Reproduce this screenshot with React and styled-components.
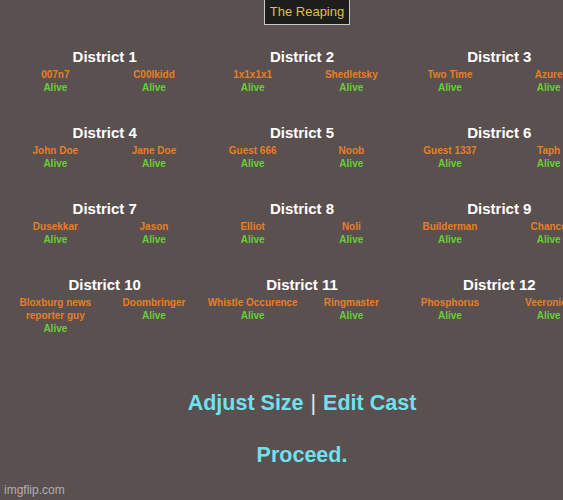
import React from "react";
import styled, { createGlobalStyle } from "styled-components";

const GlobalStyle = createGlobalStyle`
  html, body {
    margin: 0;
    padding: 0;
    background: #5a5050;
    overflow: hidden;
  }
  body {
    font-family: "Liberation Sans", Arial, sans-serif;
    height: 500px;
  }
`;

const Page = styled.div`
  position: relative;
  width: 604px;
  height: 500px;
  padding: 0 6px;
  box-sizing: border-box;
  display: flex;
  flex-direction: column;
  align-items: stretch;
`;

const TitleRow = styled.div`
  display: flex;
  justify-content: center;
  padding-left: 10px;
`;

const TitleBox = styled.div`
  background: #1d1d1b;
  border: 1px solid #c9c9c9;
  border-top: none;
  color: #e0bf48;
  font-size: 13px;
  line-height: 24px;
  padding: 0 5px;
`;

const Board = styled.div`
  margin-top: 23px;
  display: grid;
  grid-template-columns: repeat(3, 1fr);
  row-gap: 30px;
`;

const District = styled.section`
  display: flex;
  flex-direction: column;
  align-items: stretch;
`;

const Heading = styled.h2`
  margin: 0;
  text-align: center;
  color: #ffffff;
  font-size: 15px;
  font-weight: bold;
  line-height: 17px;
`;

const Tributes = styled.div`
  margin-top: 3px;
  display: grid;
  grid-template-columns: 1fr 1fr;
`;

const Tribute = styled.div`
  display: flex;
  flex-direction: column;
  align-items: center;
  text-align: center;
  font-size: 10px;
  font-weight: bold;
  line-height: 13px;
`;

const Name = styled.span`
  color: #e57f26;
`;

const Status = styled.span`
  color: #68cd37;
`;

const Links = styled.div`
  margin-top: 56px;
  text-align: center;
  font-size: 21.5px;
  font-weight: bold;
  line-height: 24px;
  color: #6fe1ef;
`;

const Divider = styled.span`
  color: #e6e6e6;
  font-weight: normal;
  padding: 0 1px;
`;

const Proceed = styled.div`
  margin-top: 28px;
  text-align: center;
  font-size: 21.5px;
  font-weight: bold;
  line-height: 24px;
  color: #6fe1ef;
`;

const Watermark = styled.div`
  position: absolute;
  left: 4px;
  bottom: 3px;
  font-size: 12px;
  color: rgba(220, 220, 220, 0.7);
`;

const districts = [
  ["007n7", "C00lkidd"],
  ["1x1x1x1", "Shedletsky"],
  ["Two Time", "Azure"],
  ["John Doe", "Jane Doe"],
  ["Guest 666", "Noob"],
  ["Guest 1337", "Taph"],
  ["Dusekkar", "Jason"],
  ["Elliot", "Noli"],
  ["Builderman", "Chance"],
  ["Bloxburg news reporter guy", "Doombringer"],
  ["Whistle Occurence", "Ringmaster"],
  ["Phosphorus", "Veeronica"],
];

export default function App() {
  return (
    <>
      <GlobalStyle />
      <Page>
        <TitleRow>
          <TitleBox>The Reaping</TitleBox>
        </TitleRow>
        <Board>
          {districts.map((pair, i) => (
            <District key={i}>
              <Heading>District {i + 1}</Heading>
              <Tributes>
                {pair.map((name) => (
                  <Tribute key={name}>
                    <Name>{name}</Name>
                    <Status>Alive</Status>
                  </Tribute>
                ))}
              </Tributes>
            </District>
          ))}
        </Board>
        <Links>
          Adjust Size <Divider>|</Divider> Edit Cast
        </Links>
        <Proceed>Proceed.</Proceed>
        <Watermark>imgflip.com</Watermark>
      </Page>
    </>
  );
}
